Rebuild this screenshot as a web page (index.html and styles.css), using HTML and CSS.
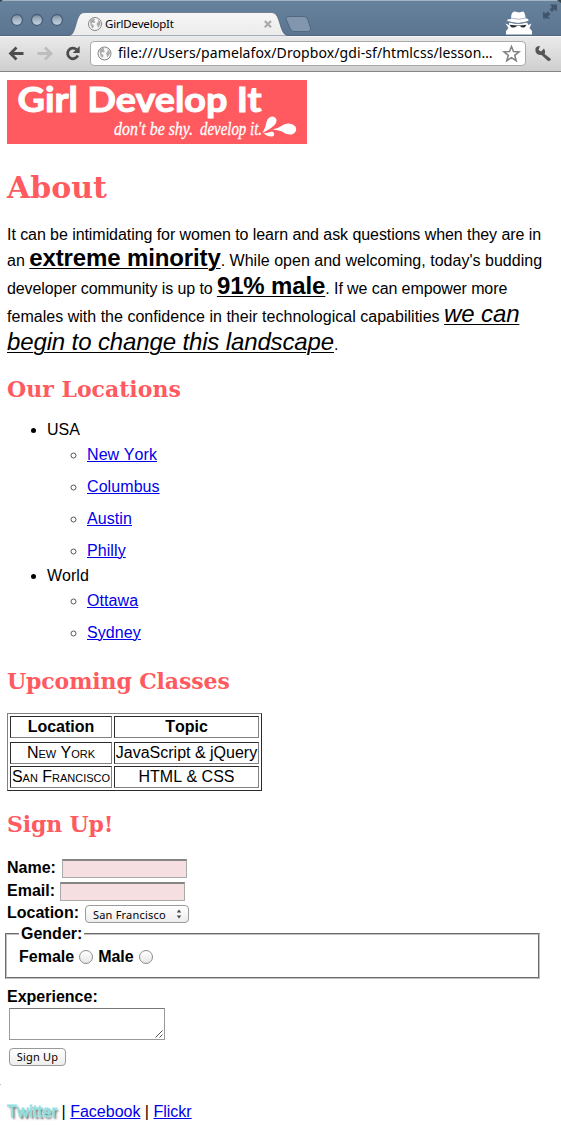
FILE: index.html
```html
<!DOCTYPE html>
<html lang="en">
<head>
<meta charset="utf-8">
<title>GirlDevelopIt</title>
<link rel="stylesheet" href="styles.css">
</head>
<body>
<header class="browser">
<svg width="561" height="72" viewBox="0 0 561 72">
  <defs>
    <linearGradient id="frame" x1="0" y1="0" x2="0" y2="1"><stop offset="0" stop-color="#67829d"/><stop offset="1" stop-color="#5b7590"/></linearGradient>
    <linearGradient id="bar" gradientUnits="userSpaceOnUse" x1="0" y1="12" x2="0" y2="71"><stop offset="0" stop-color="#f6f6f6"/><stop offset=".4" stop-color="#ebebeb"/><stop offset="1" stop-color="#cfcfcf"/></linearGradient>
    <linearGradient id="bead" x1="0" y1="0" x2="0" y2="1"><stop offset="0" stop-color="#77899a"/><stop offset=".35" stop-color="#9aacbc"/><stop offset="1" stop-color="#c9d7e3"/></linearGradient>
    <g id="globe">
      <circle r="6.5" fill="#f7f7f7" stroke="#858585"/>
      <path d="M-5-3.500-2-5.500 0-5-1-3.500.5-2-1-1-2.500-1.500-3.500 0-1.500 1-1 2.500-2.500 4.500-3.500 3-4.500.5ZM2.500-5 5-2.500 5.500 0 4 2.500 3 4 2.500 2 1.500 0 2.500-1.500 3.500-2.500Z" fill="#aaa"/>
    </g>
  </defs>
  <rect width="561" height="36" fill="url(#frame)"/>
  <rect width="561" height="1" fill="#a3b4c4"/>
  <path d="M0 0H3L0 2ZM561 0H557L561 3Z" fill="#33434a"/>
  <rect y="36" width="561" height="35" fill="url(#bar)"/>
  <path d="M0 35.500H69C77 35.500 75 12.500 84 12.500H272C281 12.500 279 35.500 288 35.500H561" fill="url(#bar)"/>
  <path d="M0 35.500H69C77 35.500 75 12.500 84 12.500H272C281 12.500 279 35.500 288 35.500H561" fill="none" stroke="#4c6075" stroke-opacity=".65"/>
  <path d="M0 36.500H70M288 36.500H561" stroke="#f7f7f7"/>
  <rect y="71" width="561" height="1" fill="#858585"/>
  <g fill="url(#bead)" stroke="#475e75" stroke-width="1.300"><circle cx="17" cy="20" r="5.500"/><circle cx="37" cy="20" r="5.500"/><circle cx="57" cy="20" r="5.500"/></g>
  <use href="#globe" x="95" y="24"/>
  <text class="tab-title" x="105" y="28" textLength="69">GirlDevelopIt</text>
  <path d="m264.800 21 6.200 6.200m0-6.200-6.200 6.200" stroke="#aaa" stroke-width="2.200"/>
  <path d="M288 16.500H304Q307 16.500 308 20L310.500 28Q311 31.500 307 31.500H294Q291 31.500 290 28L286 19Q285.500 16.500 288 16.500Z" fill="#8297ad" stroke="#4f6780"/>
  <g fill="#fff">
    <path d="M511 19Q511 11 515 11.500L519 12.500 523 11.500Q525 12 525.500 18Q530 19.500 528 21Q518 25 508 21Q505 19.500 511 19Z"/>
    <path d="M509 22.500Q518 25 527 22.500L528.500 25 531.500 23.500 529.500 28 532 31V34.500H506V31L508.500 28 505.500 23.500 509 25Z"/>
  </g>
  <path d="M511 18Q518 20.500 526 18" stroke="#aeb9c5" fill="none"/>
  <path d="M509 22Q518 25 527.500 22" stroke="#6b7e91" fill="none" stroke-width=".8"/>
  <path d="M509.500 24.700 517.500 25.500H519.500L526.500 24.700 525 27Q522 28.500 520 26H517Q514 28.500 511 27Z" fill="#263039"/>
  <path d="M549.500 4.500H557V11.500L554.500 9.500 552 12 549.500 9.500 552 7ZM543 11.500 545.500 13.500 548 11.500 550.500 14 548 16.500 550.500 18.500H543Z" fill="#40556b"/>
  <rect x="90.500" y="41.500" width="435" height="24" rx="3.500" fill="#fff" stroke="#a9a9a9"/>
  <g fill="none" stroke="#4d4d4d" stroke-width="2.800">
    <path d="M23.500 53.500H12M16.500 47.500 10.500 53.500 16.500 59.500"/>
    <path d="M37.500 53.500H49M45 47.500 51 53.500 45 59.500" stroke="#bdbdbd"/>
    <path d="M76.500 49.500A5.300 5.300 0 1 0 77.800 55.500"/>
  </g>
  <path d="M79.700 46V53H72.700Z" fill="#4d4d4d"/>
  <use href="#globe" x="104.500" y="53.500"/>
  <text class="address" x="118" y="58" textLength="374.500">file:///Users/pamelafox/Dropbox/gdi-sf/htmlcss/lesson…</text>
  <path d="m511.500 46.500 2 5 5.500.3-4.300 3.500 1.500 5.400-4.700-3-4.700 3 1.500-5.400-4.300-3.500 5.500-.3Z" fill="#fff" stroke="#808080" stroke-width="1.500"/>
  <path d="M540 46 538.500 50 541 51.500 544 48.500Q546 52 544.500 54L551 59Q550.500 61.500 548 61L541.500 55Q537 55.500 535.500 51.500V48Q537.500 45.500 540 46Z" fill="#555"/>
</svg>
</header>
<main class="page">
  <svg class="logo" width="300" height="64" viewBox="0 0 300 64">
    <rect width="300" height="64" fill="#ff5a60"/>
    <text class="logo-name" x="10.500" y="31.500" textLength="244" lengthAdjust="spacingAndGlyphs">Girl Develop It</text>
    <text class="logo-line" x="107" y="55" textLength="79" lengthAdjust="spacingAndGlyphs">don't be shy.</text>
    <text class="logo-line" x="193" y="55" textLength="62" lengthAdjust="spacingAndGlyphs">develop it.</text>
    <path d="M255.500 53Q259 47 259.500 42 261 36.500 266 36.500 271 38 269 43 267 47 255.500 53ZM265.500 49.500Q272 48 277 44.500 284 42 288.500 46.500 291 52 285 54.500 279 55 275 51.500 271 50 265.500 49.500ZM256.500 53.500Q261 53 265 51.500 268.500 53 266.500 56 262.500 58 256.500 53.500Z" fill="#fff"/>
  </svg>
  <h1 class="title">About</h1>
  <div class="intro">
    <div class="line first">It can be intimidating for women to learn and ask questions when they are in</div>
    <div class="line second">an <strong class="big">extreme minority</strong>. While open and welcoming, today's budding</div>
    <div class="line third">developer community is up to <strong class="big">91% male</strong>. If we can empower more</div>
    <div class="line fourth">females with the confidence in their technological capabilities <em class="big">we can</em></div>
    <div class="line"><em class="big">begin to change this landscape</em>.</div>
  </div>
  <h2 class="sub locations">Our Locations</h2>
  <ul class="places">
    <li>USA
      <ul class="cities"><li><a href="#">New York</a></li><li><a href="#">Columbus</a></li><li><a href="#">Austin</a></li><li><a href="#">Philly</a></li></ul>
    </li>
    <li>World
      <ul class="cities"><li><a href="#">Ottawa</a></li><li><a href="#">Sydney</a></li></ul>
    </li>
  </ul>
  <h2 class="sub classes">Upcoming Classes</h2>
  <div class="table">
    <div class="cell head">Location</div><div class="cell head">Topic</div>
    <div class="cell caps">New York</div><div class="cell">JavaScript &amp; jQuery</div>
    <div class="cell caps">San Francisco</div><div class="cell">HTML &amp; CSS</div>
  </div>
  <h2 class="sub signup">Sign Up!</h2>
  <form class="form">
    <div class="row name"><label>Name:</label><span class="input"></span></div>
    <div class="row email"><label>Email:</label><span class="input"></span></div>
    <div class="row where"><label>Location:</label><span class="select"><span>San Francisco</span><svg width="6" height="10" viewBox="0 0 6 10"><path d="M3 .5 5.200 3.500H.8ZM3 9.500.8 6.500H5.200Z" fill="#444"/></svg></span></div>
    <fieldset class="gender">
      <legend>Gender:</legend>
      <div class="options"><label>Female</label><span class="radio"></span><label>Male</label><span class="radio"></span></div>
    </fieldset>
    <div class="row experience"><label>Experience:</label></div>
    <div class="area"><svg width="8" height="8" viewBox="0 0 8 8"><path d="M.5 7.500 7.500.5M4.500 7.500 7.500 4.500" stroke="#555" fill="none"/></svg></div>
    <button class="submit" type="button">Sign Up</button>
  </form>
  <div class="rule"></div>
  <footer class="links"><span class="twitter">Twitter</span> | <a href="#">Facebook</a> | <a href="#">Flickr</a></footer>
</main>
</body>
</html>
```
FILE: styles.css
```css
* { box-sizing: border-box; }
body { margin: 0; background: #fff; color: #000; font: 16px/18px "Liberation Sans", Arial, sans-serif; font-kerning: none; }
svg { display: block; }
.browser { height: 72px; }
.tab-title { font: 11.5px "Noto Sans", sans-serif; }
.address { font: 14px "Noto Sans", sans-serif; }
.page { height: 1053px; padding: 8px 7px 0; overflow: hidden; }
.logo { overflow: visible; }
.logo-name { font: 700 35px Lato, sans-serif; fill: #fff; stroke: #fff; stroke-width: 1px; }
.logo-line { font: italic 18px "Liberation Serif", serif; fill: #fff; stroke: #fff; stroke-width: .3px; }
.title, .sub { margin: 0; color: #ff5a60; font-family: "DejaVu Serif", serif; font-weight: 700; white-space: nowrap; }
.title { margin-top: 24px; height: 39px; font-size: 30px; line-height: 40px; }
.sub { height: 30px; font-size: 22px; line-height: 30px; }
.intro { margin-top: 14px; height: 138px; }
.line { height: 28px; line-height: 28px; white-space: nowrap; }
.line.first { letter-spacing: -.065px; }
.line.second { margin-top: -2px; letter-spacing: .02px; }
.line.third { letter-spacing: -.09px; }
.line.fourth { letter-spacing: .02px; }
.big { font-size: 24px; line-height: 0; letter-spacing: -.13px; text-decoration: underline; text-decoration-thickness: 1px; text-underline-offset: 2px; }
.locations { margin-top: 15px; }
.places { margin: 17px 0 0; padding-left: 40px; height: 227px; }
.cities { margin: 0; padding-left: 40px; }
.cities li { height: 32px; line-height: 32px; }
.cities li::marker { color: #555; }
a { color: #0000e9; text-decoration-thickness: 1px; }
.places a { letter-spacing: .08px; }
.classes { margin-top: 18px; letter-spacing: -.12px; }
.table { width: 255px; height: 78px; margin-top: 17px; padding: 2px; border: 1px solid; border-color: #808080 #2a2a2a #2a2a2a #808080; display: grid; grid-template-columns: 102px 145px; grid-template-rows: 26px 24px 22px; column-gap: 2px; }
.cell { height: 22px; line-height: 20px; border: 1px solid; border-color: #2a2a2a #808080 #808080 #2a2a2a; text-align: center; white-space: nowrap; }
.head { font-weight: 700; }
.caps { font-variant: small-caps; }
.signup { margin-top: 18px; letter-spacing: -.15px; }
.form { margin-top: 20px; font-weight: 700; height: 226px; }
.row { display: flex; height: 23px; align-items: flex-start; }
.input { width: 125px; height: 19px; background: #f5dfe1; border: 1px solid #aaa; border-top: 2px solid #858585; }
.name .input { margin-left: 6px; }
.email .input { margin-left: 5px; }
.where { height: 27px; margin-top: -1px; }
.select { width: 104px; height: 18px; margin: 1px 0 0 6px; padding: 0 6px 0 7px; display: flex; align-items: center; justify-content: space-between; border: 1px solid #9b9b9b; border-radius: 4px; background: linear-gradient(#fff, #ededed); font: 11px "Noto Sans", sans-serif; letter-spacing: .2px; }
.gender { margin: -6px 0 0 -2px; width: 535px; height: 54px; border: 2px groove #c0c0c0; padding: 0 12px; }
.gender legend { padding: 0 2px; height: 18px; }
.options { display: flex; align-items: center; height: 18px; margin-top: 5px; }
.radio { width: 14px; height: 14px; margin: 0 5px 0 5px; border: 1px solid #8c8c8c; border-radius: 50%; background: linear-gradient(#fff, #e6e6e6); }
.experience { margin-top: 9px; height: 20px; }
.area { width: 156px; height: 32px; margin-left: 2px; border: 1px solid #999; border-top-color: #777; display: flex; justify-content: flex-end; align-items: flex-end; padding: 1px; }
.submit { display: block; margin: 8px 0 0 2px; width: 57px; height: 18px; padding: 0; border: 1px solid #999; border-radius: 4px; background: linear-gradient(#fff, #ededed); font: 11px/16px "Noto Sans", sans-serif; letter-spacing: .2px; color: #000; }
.rule { width: 1px; height: 1px; margin: -1px 0 0 -7px; background: #bbb; }
.links { margin-top: 18px; white-space: nowrap; }
.twitter { color: #90e0e0; -webkit-text-stroke: .8px #90e0e0; letter-spacing: .3px; text-shadow: 2px 2px 2px #555; }
```
